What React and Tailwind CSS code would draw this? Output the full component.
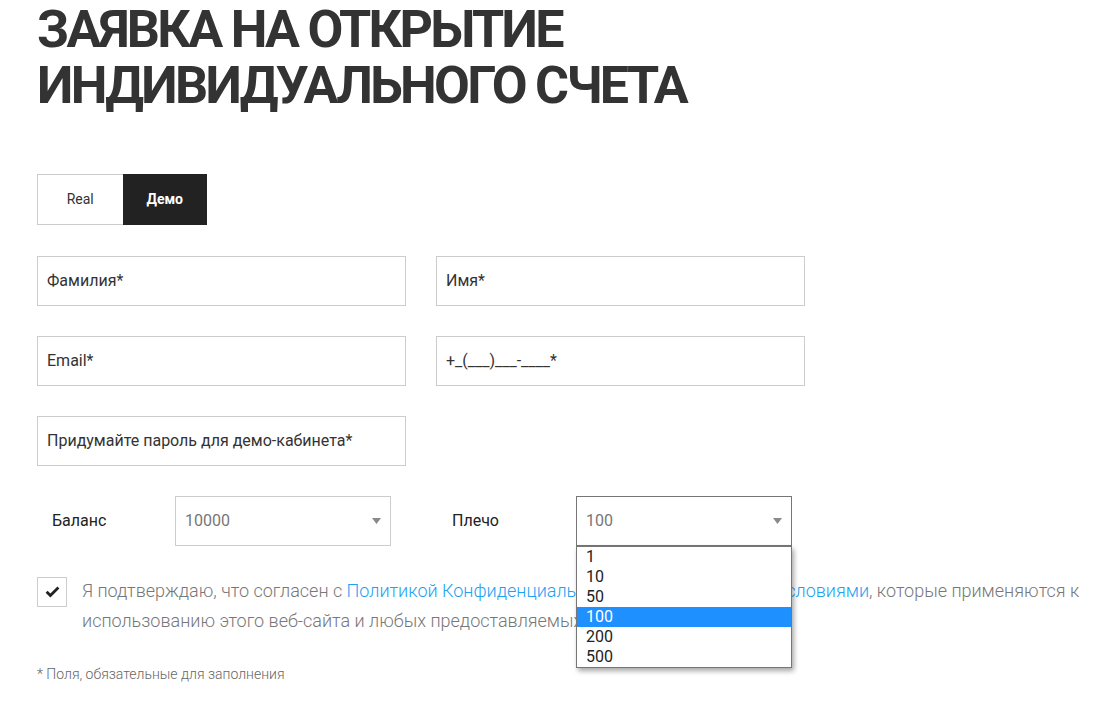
import React from "react";

function Field({ label, className = "" }) {
  return (
    <div className={`h-[50px] w-[369px] border border-[#cccccc] bg-white flex items-center pl-[9px] text-[16px] text-[#333] ${className}`}>
      {label}
    </div>
  );
}

function Arrow() {
  return (
    <svg width="9" height="6" viewBox="0 0 9 6" className="block">
      <path d="M0 0 H9 L4.5 6 Z" fill="#8a8a8a" />
    </svg>
  );
}

export default function App() {
  const options = ["1", "10", "50", "100", "200", "500"];
  return (
    <div className="min-h-[706px] w-[1104px] bg-white font-['Roboto','Liberation_Sans',sans-serif] overflow-hidden">
      <div className="pl-[37px] pt-[2px]">
        <h1 className="text-[52px] leading-[56px] font-bold text-[#333] tracking-[-2.7px] uppercase">
          Заявка на открытие
          <br />
          индивидуального счета
        </h1>

        <div className="mt-[60px] flex h-[51px] w-[170px]">
          <div className="flex-1 flex items-center justify-center border border-[#cccccc] border-r-0 text-[14px] text-[#333]">
            Real
          </div>
          <div className="flex-1 flex items-center justify-center bg-[#222222] text-white text-[14px] font-bold">
            Демо
          </div>
        </div>

        <div className="mt-[31px] flex flex-col gap-[30px]">
          <div className="flex gap-[30px]">
            <Field label="Фамилия*" />
            <Field label="Имя*" />
          </div>
          <div className="flex gap-[30px]">
            <Field label="Email*" />
            <Field label="+_(___)___-____*" />
          </div>
          <div className="flex gap-[30px]">
            <Field label="Придумайте пароль для демо-кабинета*" />
          </div>
          <div className="flex items-center">
            <div className="w-[138px] pl-[15px] text-[16px] text-[#222]">Баланс</div>
            <div className="h-[50px] w-[216px] border border-[#cccccc] flex items-center justify-between pl-[9px] pr-[9px] text-[16px] text-[#777]">
              <span>10000</span>
              <Arrow />
            </div>
            <div className="w-[185px] pl-[61px] text-[16px] text-[#222]">Плечо</div>
            <div className="relative">
              <div className="h-[50px] w-[216px] border border-[#767676] flex items-center justify-between pl-[9px] pr-[9px] text-[16px] text-[#777]">
                <span>100</span>
                <Arrow />
              </div>
              <div className="absolute left-0 top-[50px] z-10 w-[216px] border border-[#767676] bg-white shadow-[2px_3px_5px_rgba(0,0,0,0.35)]">
                {options.map((o) => (
                  <div
                    key={o}
                    className={`h-[20px] leading-[20px] pl-[9px] text-[16px] ${o === "100" ? "bg-[#1e90ff] text-white" : "text-[#222]"}`}
                  >
                    {o}
                  </div>
                ))}
              </div>
            </div>
          </div>
        </div>

        <div className="mt-[31px] flex items-start gap-[15px]">
          <div className="w-[30px] h-[30px] border border-[#cccccc] flex items-center justify-center shrink-0">
            <svg width="15" height="12" viewBox="0 0 15 12">
              <path d="M1.6 5.8 L5.4 9.6 L13.4 1.6" stroke="#222" strokeWidth="2.8" fill="none" />
            </svg>
          </div>
          <p className="-mt-[1px] text-[18px] leading-[30px] text-[#777] font-light whitespace-nowrap">
            Я подтверждаю, что согласен с{" "}
            <span className="text-[#1da1f2]">Политикой Конфиденциальности</span> и{" "}
            <span className="text-[#1da1f2]">Юридическими Условиями</span>, которые применяются к
            <br />
            использованию этого веб-сайта и любых предоставляемых услуг.
          </p>
        </div>

        <p className="mt-[28px] text-[14px] text-[#666] font-light">* Поля, обязательные для заполнения</p>
      </div>
    </div>
  );
}
